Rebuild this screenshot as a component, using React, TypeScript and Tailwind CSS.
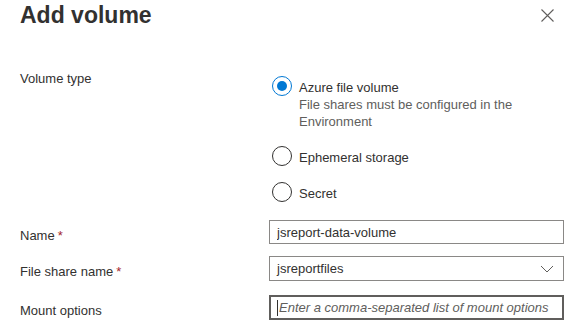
import React from "react";

const font = { fontFamily: '"Liberation Sans", Arial, sans-serif' };

const options = [
	{ id: "azure", label: "Azure file volume", hint: "File shares must be configured in the Environment" },
	{ id: "ephemeral", label: "Ephemeral storage" },
	{ id: "secret", label: "Secret" },
];

const Radio = ({ checked }: { checked: boolean }) => (
	<span
		className={`ml-[3px] flex h-[20px] w-[20px] shrink-0 items-center justify-center rounded-full border ${
			checked ? "border-[#0078d4]" : "border-[#323130]"
		}`}
	>
		{checked && <span className="h-[10px] w-[10px] rounded-full bg-[#0078d4]" />}
	</span>
);

const Label = ({ text, required }: { text: string; required?: boolean }) => (
	<div className="w-[249px] shrink-0 pt-[7px] text-[13px] leading-[17px] text-[#323130]">
		{text}
		{required && <span className="ml-[3px] text-[#a4262c]">*</span>}
	</div>
);

export default function App() {
	const [volumeType, setVolumeType] = React.useState("azure");

	return (
		<div className="h-[334px] w-[580px] overflow-hidden bg-white" style={font}>
			<div className="flex h-[32px] items-start justify-between pl-[20px] pr-[26px]">
				<h1 className="mt-[1px] text-[23px] font-semibold leading-[28px] text-[#323130]">
					Add volume
				</h1>
				<button className="mt-[9px] text-[#605e5c]" aria-label="Close">
					<svg width="13" height="13" viewBox="0 0 13 13" fill="none" stroke="currentColor" strokeWidth="1.1">
						<path d="M0.5 0.5l12 12M12.5 0.5l-12 12" />
					</svg>
				</button>
			</div>

			<div className="flex flex-col pl-[20px] pr-[16px]">
				<div className="mt-[38px] flex">
					<div className="w-[249px] shrink-0 text-[13px] leading-[17px] text-[#323130]">Volume type</div>
					<div className="flex flex-col gap-[16px] pt-[6px]">
						{options.map((o) => (
							<label
								key={o.id}
								className="flex cursor-pointer items-start gap-[7px]"
								onClick={() => setVolumeType(o.id)}
							>
								<Radio checked={volumeType === o.id} />
								<div className="pt-[3px] text-[13px] leading-[17px]">
									<div className="text-[#323130]">{o.label}</div>
									{o.hint && <div className="w-[230px] text-[#605e5c]">{o.hint}</div>}
								</div>
							</label>
						))}
					</div>
				</div>

				<div className="mt-[18px] flex">
					<Label text="Name" required />
					<input
						defaultValue="jsreport-data-volume"
						className="h-[24px] flex-1 border border-[#8a8886] px-[7px] text-[13px] text-[#323130] outline-none"
					/>
				</div>

				<div className="mt-[12px] flex">
					<Label text="File share name" required />
					<div className="flex h-[25px] flex-1 items-center justify-between border border-[#8a8886] pl-[7px] pr-[9px] text-[13px] text-[#323130]">
						<span>jsreportfiles</span>
						<svg width="14" height="8" viewBox="0 0 14 8" fill="none" stroke="#605e5c" strokeWidth="1">
							<path d="M1 1l6 6 6-6" />
						</svg>
					</div>
				</div>

				<div className="mt-[14px] flex">
					<Label text="Mount options" />
					<div className="flex h-[25px] flex-1 items-center border-2 border-[#605e5c] pl-[6px]">
						<span className="mr-[1px] h-[16px] w-px bg-[#323130]" />
						<span className="text-[13px] italic text-[#605e5c]">
							Enter a comma-separated list of mount options
						</span>
					</div>
				</div>
			</div>
		</div>
	);
}
